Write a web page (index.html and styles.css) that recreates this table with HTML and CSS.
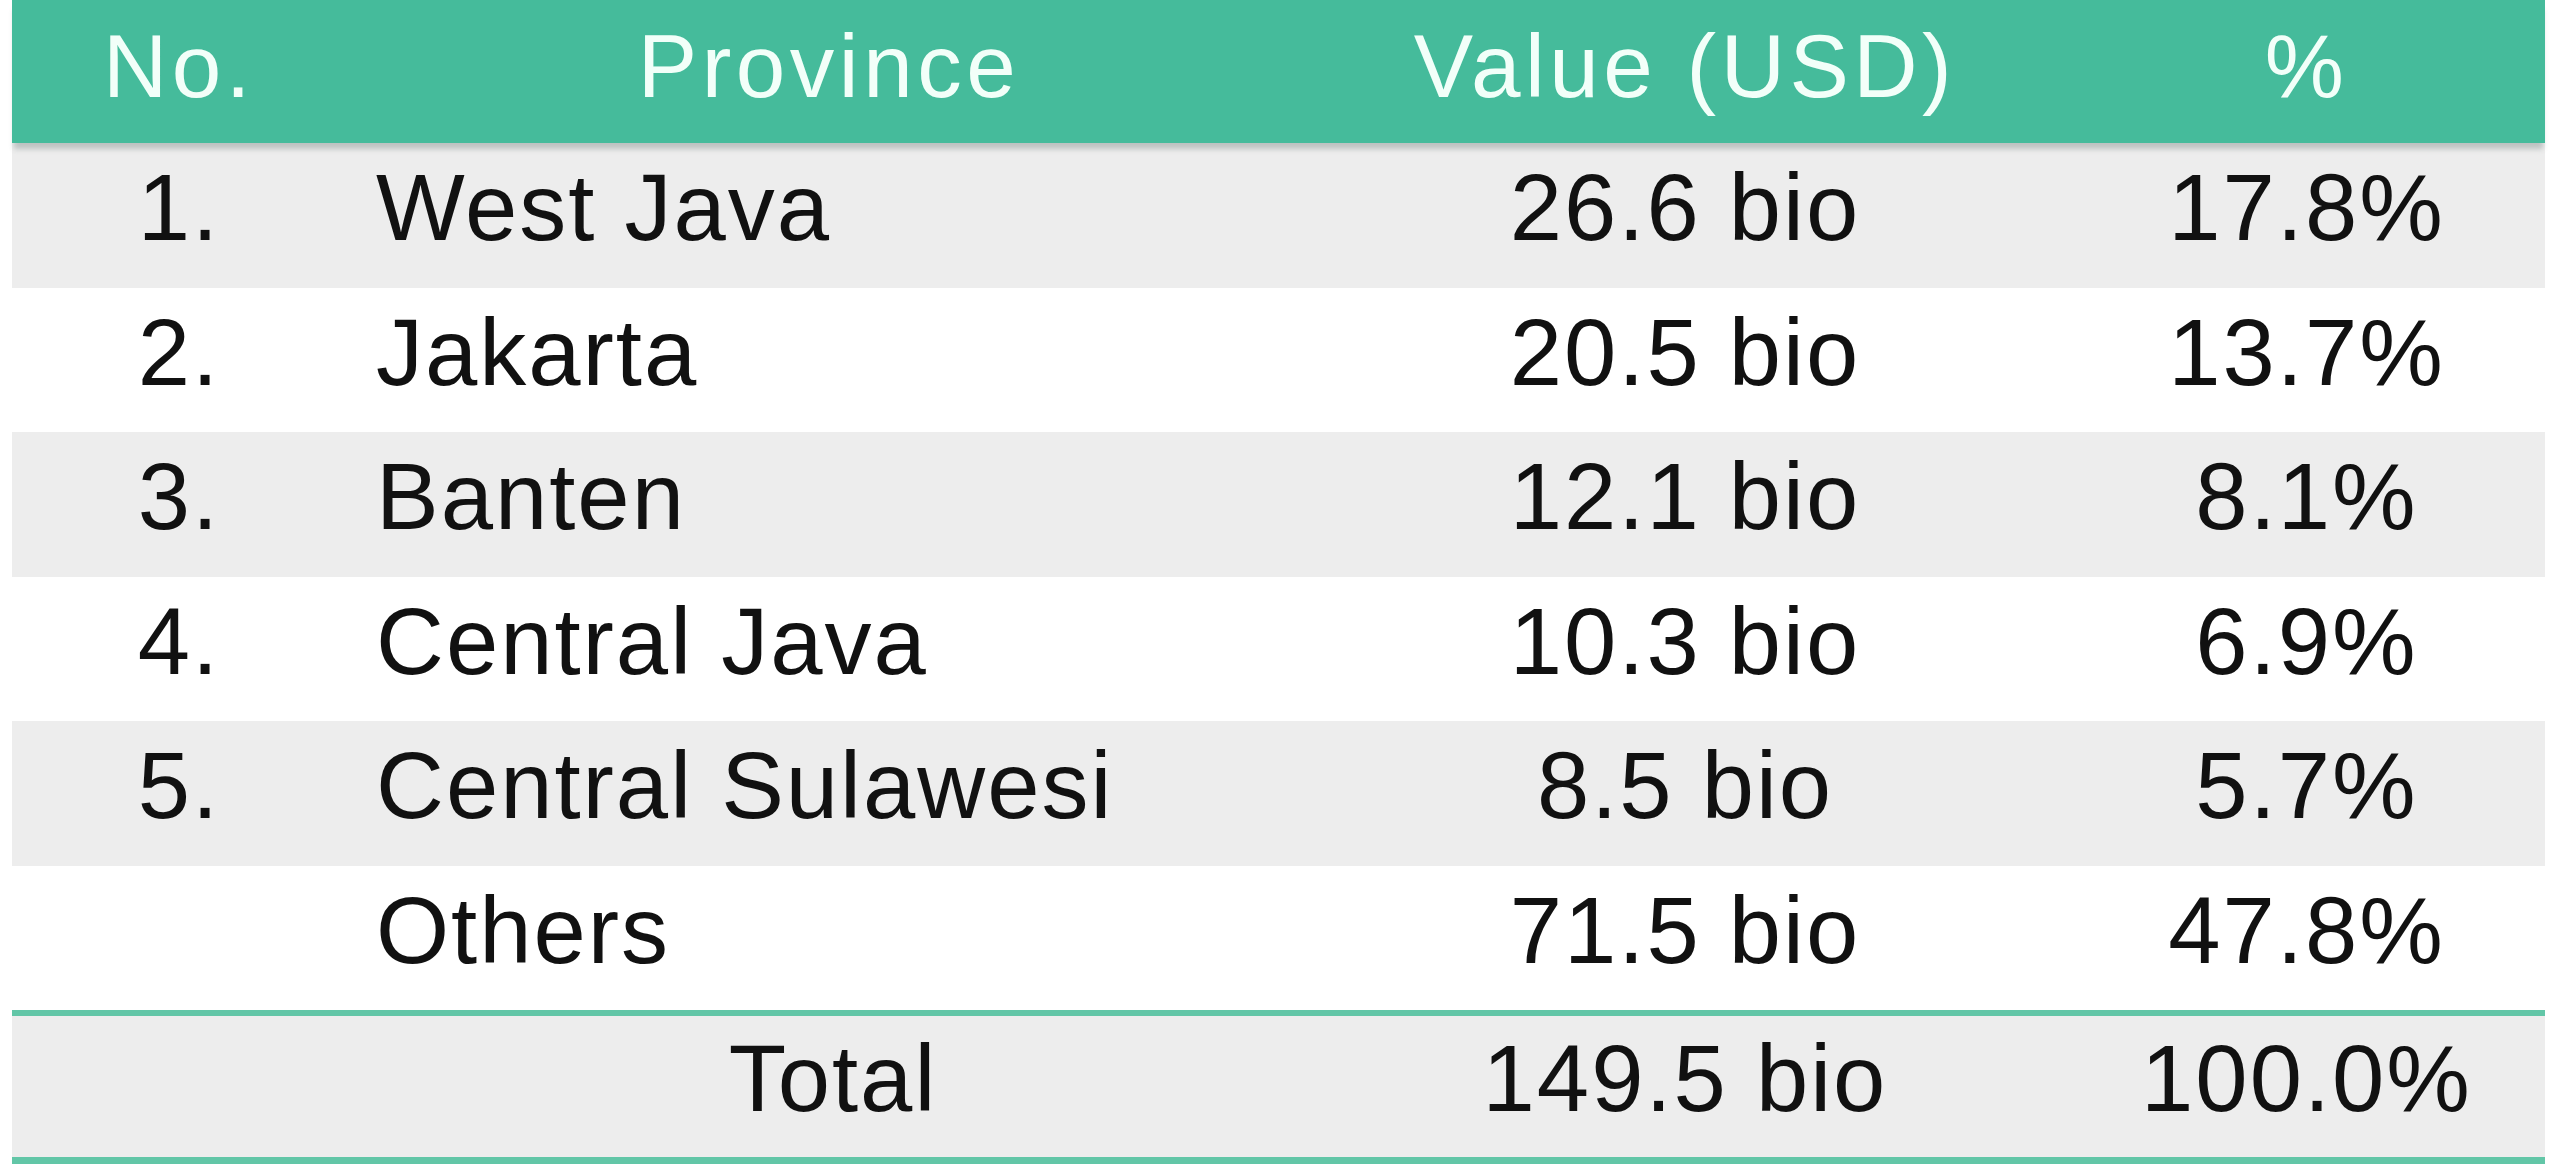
FILE: index.html
```html
<!DOCTYPE html>
<html>
<head>
<meta charset="utf-8">
<link rel="stylesheet" href="styles.css">
</head>
<body>
<div class="table">
  <div class="row head">
    <div class="cell c-no">No.</div>
    <div class="cell c-center c-provhead">Province</div>
    <div class="cell c-center c-val">Value (USD)</div>
    <div class="cell c-center c-pct">%</div>
  </div>
  <div class="row shade">
    <div class="cell c-no">1.</div>
    <div class="cell c-prov">West Java</div>
    <div class="cell c-center c-val">26.6 bio</div>
    <div class="cell c-center c-pct">17.8%</div>
  </div>
  <div class="row">
    <div class="cell c-no">2.</div>
    <div class="cell c-prov">Jakarta</div>
    <div class="cell c-center c-val">20.5 bio</div>
    <div class="cell c-center c-pct">13.7%</div>
  </div>
  <div class="row shade">
    <div class="cell c-no">3.</div>
    <div class="cell c-prov">Banten</div>
    <div class="cell c-center c-val">12.1 bio</div>
    <div class="cell c-center c-pct">8.1%</div>
  </div>
  <div class="row">
    <div class="cell c-no">4.</div>
    <div class="cell c-prov">Central Java</div>
    <div class="cell c-center c-val">10.3 bio</div>
    <div class="cell c-center c-pct">6.9%</div>
  </div>
  <div class="row shade">
    <div class="cell c-no">5.</div>
    <div class="cell c-prov">Central Sulawesi</div>
    <div class="cell c-center c-val">8.5 bio</div>
    <div class="cell c-center c-pct">5.7%</div>
  </div>
  <div class="row">
    <div class="cell c-no"></div>
    <div class="cell c-prov">Others</div>
    <div class="cell c-center c-val">71.5 bio</div>
    <div class="cell c-center c-pct">47.8%</div>
  </div>
  <div class="row shade total">
    <div class="cell c-no"></div>
    <div class="cell c-center">Total</div>
    <div class="cell c-center c-val">149.5 bio</div>
    <div class="cell c-center c-pct">100.0%</div>
  </div>
</div>
</body>
</html>
```

FILE: styles.css
```css
html, body {
  margin: 0;
  padding: 0;
  background: #ffffff;
}

body {
  font-family: "Liberation Sans", Arial, sans-serif;
  color: #111111;
  overflow: hidden;
}

.table {
  margin-left: 12px;
  width: 2533px;
  display: flex;
  flex-direction: column;
}

.row {
  display: grid;
  grid-template-columns: 334px 974px 744px 1fr;
  height: 144.5px;
  background: #ffffff;
  font-size: 94px;
  letter-spacing: 2px;
  line-height: 129px;
}

.row.shade {
  background: #ededed;
}

.row.head {
  position: relative;
  z-index: 1;
  height: 143px;
  background: #45bb9b;
  color: #f2fff9;
  font-size: 89px;
  letter-spacing: 4.5px;
  line-height: 132px;
  box-shadow: 0 8px 5px -2px rgba(80, 100, 95, 0.3);
}

.row.total {
  height: 141px;
  line-height: 126px;
  border-top: 6px solid #62c6a7;
  border-bottom: 7px solid #62c6a7;
}

.cell {
  white-space: nowrap;
}

.c-no {
  text-align: center;
}

.c-center {
  text-align: center;
}

.c-provhead {
  padding-right: 8px;
}

.c-prov {
  padding-left: 30px;
}

.c-val {
  padding-right: 14px;
}

.c-pct {
  padding-left: 4px;
}
```
